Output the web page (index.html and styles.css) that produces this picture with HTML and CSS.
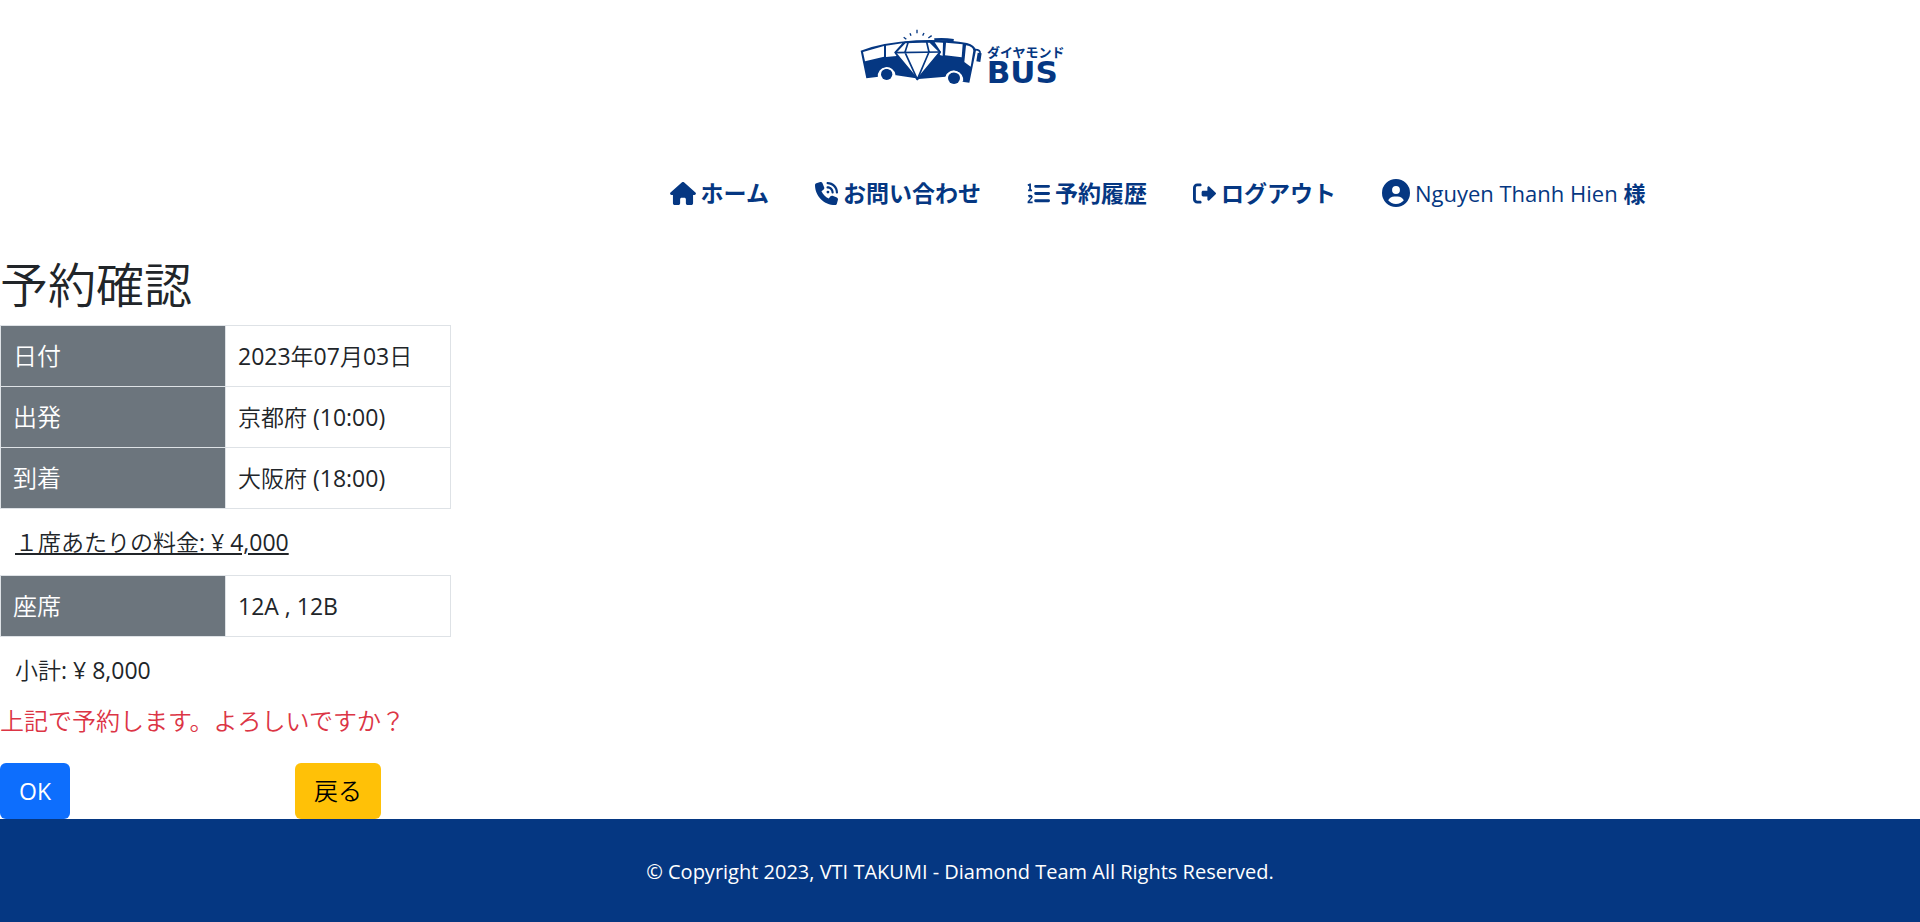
FILE: index.html
```html
<!DOCTYPE html>
<html lang="ja">
<head>
<meta charset="utf-8">
<meta name="viewport" content="width=device-width, initial-scale=1">
<title>予約確認</title>
<link rel="stylesheet" href="styles.css">
</head>
<body>
<header class="header">
  <a class="logo" href="#" aria-label="ダイヤモンドBUS">
    <svg class="logo-image" viewBox="16 20 642 240" aria-hidden="true">
      <path class="ink" d="M33 91Q100 66 200 60Q290 56 352 68Q376 75 379 90L359 187L337 184A25 25 0 0 0 288 169L207 176L203 180L199 174L135 164A24 24 0 0 0 87 169L50 174Z"/>
      <circle class="ink" cx="111" cy="162" r="17"/>
      <circle class="ink" cx="313" cy="173" r="18"/>
      <path class="wheel-arch" d="M87 170A24 24 0 0 1 135 164M288 175A25 25 0 0 1 338 184"/>
      <path class="paper" d="M40 95L103 77V109L46 123ZM109 76L158 69L134 96L141 107L109 110ZM255 66L280 67L279 106L270 104L274 95ZM289 67L339 72L336 111L286 105ZM349 75Q371 79 371 91L363 139L344 125Z"/>
      <path class="paper facet" d="M166 66L240 64L271 95L203 177L137 97Z"/>
      <path class="line" d="M137 97L271 95M175 67L166 96L203 177L238 95L231 65"/>
      <path class="line rays" d="M202 28V39M181 39L184 46M162 51L170 57M223 38L219 46M246 46L236 53"/>
      <path class="line mirror" d="M376 88Q394 88 391 101"/>
      <path class="line visor" d="M390 98L386 124"/>
      <path class="line rack" d="M254 58Q282 55 312 60"/>
      <text class="logo-kana" x="412" y="110">ダイヤモンド</text>
      <text class="logo-word" x="411" y="187">BUS</text>
    </svg>
  </a>
  <nav class="nav">
    <a class="nav-link" href="#"><svg class="icon icon-home" viewBox="0 0 576 512" aria-hidden="true"><path d="M575.800 255.500c0 18-15 32.100-32 32.100h-32l.7 160.200c0 2.700-.2 5.400-.5 8.100V472c0 22.100-17.900 40-40 40H392c-22.100 0-40-17.900-40-40v-88c0-17.700-14.300-32-32-32h-64c-17.700 0-32 14.300-32 32v88c0 22.100-17.900 40-40 40h-80c-22.100 0-40-17.900-40-40V287.600H32c-18 0-32-14-32-32.100 0-9 3-17 10-24L266.400 8c7-7 15-8 22-8s15 2 21 7l255.400 224.500c8 7 12 15 11 24z"/></svg>ホーム</a>
    <a class="nav-link" href="#"><svg class="icon" viewBox="0 0 512 512" aria-hidden="true"><path d="M280 0C408.100 0 512 103.900 512 232c0 13.300-10.700 24-24 24s-24-10.700-24-24c0-101.600-82.400-184-184-184-13.300 0-24-10.700-24-24s10.700-24 24-24zm8 192a32 32 0 1 1 0 64 32 32 0 1 1 0-64zm-32-72c0-13.300 10.700-24 24-24 75.100 0 136 60.900 136 136 0 13.300-10.700 24-24 24s-24-10.700-24-24c0-48.600-39.400-88-88-88-13.300 0-24-10.700-24-24zM117.500 1.400c19.400-5.300 39.700 4.600 47.400 23.200l40 96c6.800 16.300 2.100 35.200-11.600 46.300L144 207.300c33.300 70.400 90.300 127.400 160.700 160.700l40.400-49.300c11.200-13.700 29.900-18.400 46.300-11.600l96 40c18.600 7.700 28.500 28 23.200 47.400l-24 88C481.800 499.900 466 512 448 512 200.600 512 0 311.400 0 64 0 46 12.100 30.200 29.500 25.400z"/></svg>お問い合わせ</a>
    <a class="nav-link" href="#"><svg class="icon" viewBox="0 0 512 512" aria-hidden="true"><path d="M64 32h24v136h24v40H24v-40h24V83l-24 8-12-38zM18 303c31-36 107-26 107 28 0 22-9 33-24 49l-45 52h69v40H13v-36l60-70c16-18 13-30-1-30-11 0-15 5-25 17zM192 64h288a32 32 0 0 1 0 64H192a32 32 0 0 1 0-64zM192 224h288a32 32 0 0 1 0 64H192a32 32 0 0 1 0-64zM192 384h288a32 32 0 0 1 0 64H192a32 32 0 0 1 0-64z"/></svg>予約履歴</a>
    <a class="nav-link" href="#"><svg class="icon" viewBox="0 0 512 512" aria-hidden="true"><path d="M160 96c17.700 0 32-14.300 32-32s-14.300-32-32-32H96C43 32 0 75 0 128v256c0 53 43 96 96 96h64c17.700 0 32-14.300 32-32s-14.300-32-32-32H96c-17.700 0-32-14.300-32-32V128c0-17.700 14.300-32 32-32zm344.500 177.400c4.800-4.500 7.500-10.800 7.500-17.400s-2.700-12.900-7.500-17.400l-144-136c-7-6.600-17.200-8.400-26-4.600S320 110.400 320 120v72h-96c-17.700 0-32 14.300-32 32v64c0 17.700 14.300 32 32 32h96v72c0 9.600 5.700 18.200 14.500 22s19 2 26-4.600z"/></svg>ログアウト</a>
    <a class="nav-link nav-user" href="#"><svg class="icon icon-user" viewBox="0 0 512 512" aria-hidden="true"><path fill-rule="evenodd" d="M256 0a256 256 0 1 1 0 512 256 256 0 1 1 0-512zm143 387c-22-40-64-67-112-67h-62c-48 0-90 27-112 67 35 42 86 69 143 69s108-27 143-69zM256 272a72 72 0 1 0 0-144 72 72 0 1 0 0 144z"/></svg><span>Nguyen Thanh Hien <b>様</b></span></a>
  </nav>
</header>
<main class="main">
  <h1 class="title">予約確認</h1>
  <table class="info">
    <tr><th scope="row">日付</th><td>2023年07月03日</td></tr>
    <tr><th scope="row">出発</th><td>京都府 (10:00)</td></tr>
    <tr><th scope="row">到着</th><td>大阪府 (18:00)</td></tr>
  </table>
  <p class="amount"><u>１席あたりの料金: ¥ 4,000</u></p>
  <table class="info">
    <tr><th scope="row">座席</th><td>12A , 12B</td></tr>
  </table>
  <p class="amount">小計: ¥ 8,000</p>
  <p class="confirm">上記で予約します。よろしいですか？</p>
  <div class="actions">
    <button class="button button-ok" type="button">OK</button>
    <button class="button button-back" type="button">戻る</button>
  </div>
</main>
<footer class="footer">© Copyright 2023, VTI TAKUMI - Diamond Team All Rights Reserved.</footer>
</body>
</html>
```

FILE: styles.css
```css
:root {
  --navy: #053782;
  --text: #212529;
  --border: #dee2e6;
  --light-kana: "Noto Sans CJK JP DemiLight", "Noto Sans CJK JP Light", "Noto Sans CJK JP", sans-serif;
}

* {
  box-sizing: border-box;
}

body {
  margin: 0;
  min-height: 100vh;
  display: flex;
  flex-direction: column;
  background: #fff;
  color: var(--text);
  font-family: "Open Sans", var(--light-kana);
  font-size: 24px;
  line-height: 36px;
}

.header {
  display: flex;
  flex-direction: column;
  align-items: center;
  gap: 68px;
  padding: 27px 0 46px;
}

.logo {
  display: block;
  padding-left: 4px;
}

.logo-image {
  display: block;
  width: 214px;
  height: 80px;
}

.ink {
  fill: var(--navy);
}

.paper {
  fill: #fff;
}

.wheel-arch {
  fill: none;
  stroke: #fff;
  stroke-width: 5px;
}

.facet,
.line {
  stroke: var(--navy);
  stroke-width: 5px;
  stroke-linejoin: round;
}

.line {
  fill: none;
}

.rays {
  stroke-width: 4px;
}

.visor {
  stroke-width: 12px;
}

.rack {
  stroke-width: 8px;
}

.logo-kana {
  fill: var(--navy);
  font-family: "Noto Sans CJK JP", sans-serif;
  font-size: 39px;
  font-weight: 700;
}

.logo-word {
  fill: var(--navy);
  font-family: "DejaVu Sans", sans-serif;
  font-size: 93px;
  font-weight: 700;
}

.nav {
  align-self: stretch;
  display: flex;
  flex-wrap: wrap;
  justify-content: center;
  gap: 0 46px;
  padding-left: 395px;
}

.nav-link {
  display: flex;
  align-items: center;
  gap: 5px;
  color: var(--navy);
  font-family: "Open Sans", "Noto Sans CJK JP", sans-serif;
  font-size: 23px;
  font-weight: 700;
  text-decoration: none;
}

.nav-user {
  font-size: 22px;
  font-weight: 500;
}

.icon {
  width: 23px;
  height: 23px;
  fill: currentColor;
}

.icon-home {
  width: 26px;
}

.icon-user {
  width: 28px;
  height: 28px;
}

.title {
  margin: 0 0 12px;
  font-size: 48px;
  font-weight: 400;
  line-height: 56px;
}

.info {
  width: 451px;
  table-layout: fixed;
  border-collapse: collapse;
}

.info th,
.info td {
  padding: 12px;
  border: 1px solid var(--border);
  font-weight: 400;
  text-align: left;
}

.info th {
  background: #6c757d;
  color: #fff;
}

.info td {
  font-size: 23px;
}

.amount {
  margin: 0;
  padding: 15px;
  font-size: 23px;
}

.confirm {
  margin: 0 0 24px;
  color: #dc3545;
}

.actions {
  display: flex;
  gap: 225px;
}

.button {
  padding: 9px 18px;
  border: 1px solid transparent;
  border-radius: 6px;
  font: inherit;
  cursor: pointer;
}

.button-ok {
  background: #0d6efd;
  color: #fff;
  font-size: 23px;
}

.button-back {
  background: #ffc107;
  color: #000;
}

.footer {
  flex-grow: 1;
  padding: 38px 12px 34px;
  background: var(--navy);
  color: #fff;
  font-size: 20px;
  line-height: 30px;
  text-align: center;
}
```
